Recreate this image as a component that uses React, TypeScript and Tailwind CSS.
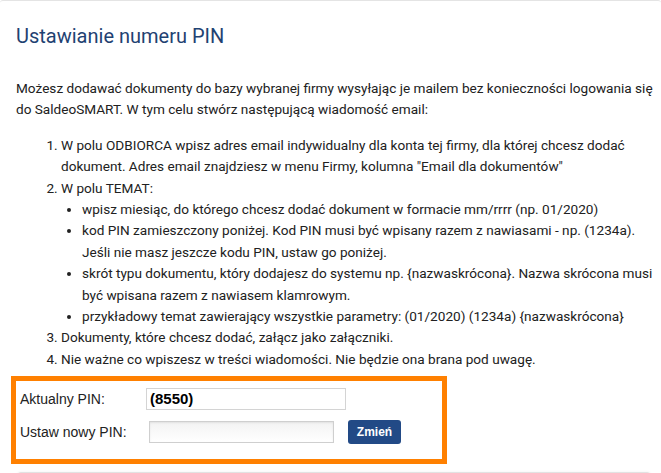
import React from 'react';

const PinSettings: React.FC = () => {
  return (
    <div className="min-h-screen bg-white font-['Roboto',sans-serif] text-[#212121]">
      <div className="rounded-t-[3px] border-t border-[#e4e4e4] pl-4 pr-[6px]">
        <h1 className="pt-[22px] text-[20px] leading-[26px] text-[#1f4272]">Ustawianie numeru PIN</h1>

        <p className="mt-[29px] text-[13.6px] leading-[21.4px]">
          Możesz dodawać dokumenty do bazy wybranej firmy wysyłając je mailem bez konieczności logowania się do
          SaldeoSMART. W tym celu stwórz następującą wiadomość email:
        </p>

        <ol className="mt-[14px] list-decimal pl-[45px] text-[13.6px] leading-[21.4px]">
          <li>
            W polu ODBIORCA wpisz adres email indywidualny dla konta tej firmy, dla której chcesz dodać dokument. Adres
            email znajdziesz w menu Firmy, kolumna "Email dla dokumentów"
          </li>
          <li>
            W polu TEMAT:
            <ul className="list-disc pl-[21px]">
              <li>wpisz miesiąc, do którego chcesz dodać dokument w formacie mm/rrrr (np. 01/2020)</li>
              <li>
                kod PIN zamieszczony poniżej. Kod PIN musi być wpisany razem z nawiasami - np. (1234a). Jeśli nie masz
                jeszcze kodu PIN, ustaw go poniżej.
              </li>
              <li>
                skrót typu dokumentu, który dodajesz do systemu np. {'{nazwaskrócona}'}. Nazwa skrócona musi być
                wpisana razem z nawiasem klamrowym.
              </li>
              <li>przykładowy temat zawierający wszystkie parametry: (01/2020) (1234a) {'{nazwaskrócona}'}</li>
            </ul>
          </li>
          <li>Dokumenty, które chcesz dodać, załącz jako załączniki.</li>
          <li>Nie ważne co wpiszesz w treści wiadomości. Nie będzie ona brana pod uwagę.</li>
        </ol>

        <div className="-ml-[5px] mt-[6px] w-[436px] border-[5px] border-[#ff8000] pb-[15px] pl-[4px] pt-[7px] font-['Liberation_Sans',Arial,sans-serif] text-[14px] text-[#222]">
          <div className="flex h-[22px] items-center">
            <span className="w-[126px]">Aktualny PIN:</span>
            <div className="flex h-[22px] w-[200px] items-center border border-[#d4d4d4] pl-[3px] text-[15px] font-bold text-black">
              (8550)
            </div>
          </div>
          <div className="mt-[10px] flex h-[24px] items-center">
            <span className="w-[129px]">Ustaw nowy PIN:</span>
            <input
              type="text"
              className="h-[22px] w-[185px] border border-[#cfcfcf] bg-gradient-to-b from-[#f3f3f3] to-white shadow-[inset_0_1px_2px_rgba(0,0,0,0.08)] outline-none"
            />
            <button className="ml-[14px] h-[24px] w-[53px] rounded-[3px] bg-[#224a86] text-[12px] font-bold text-white">
              Zmień
            </button>
          </div>
        </div>
      </div>

      <div className="ml-4 mt-[8px] h-[20px] w-[636px] rounded-t-[5px] border border-[#e2e2e2] shadow-[0_-1px_2px_rgba(0,0,0,0.03)]" />
    </div>
  );
};

export default function App() {
  return <PinSettings />;
}
